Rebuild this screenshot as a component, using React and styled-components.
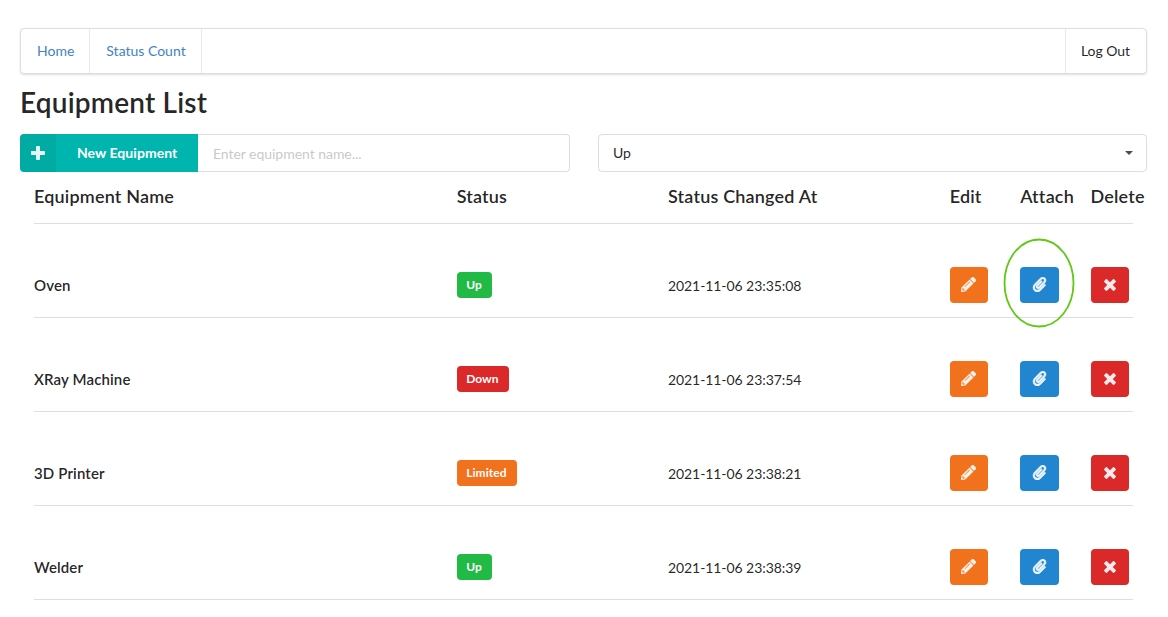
import React from "react";
import styled, { createGlobalStyle } from "styled-components";
import { FaPaperclip, FaPencilAlt } from "react-icons/fa";

const GlobalStyle = createGlobalStyle`
  *, *::before, *::after { box-sizing: border-box; }
  body {
    margin: 0;
    background: #fff;
    color: rgba(0, 0, 0, 0.87);
    font-family: Lato, "Liberation Sans", sans-serif;
    font-size: 14px;
    line-height: 20px;
    overflow: hidden;
  }
`;

const Page = styled.main`
  width: 1127px;
  margin-left: 20px;
  padding-top: 28px;
`;

const Menu = styled.nav`
  display: flex;
  height: 46px;
  border: 1px solid rgba(34, 36, 38, 0.15);
  border-radius: 4px;
  box-shadow: 0 1px 2px 0 rgba(34, 36, 38, 0.15);
`;

const MenuItem = styled.a`
  display: flex;
  align-items: center;
  padding: 0 15px 0 16px;
  color: ${(p) => (p.$plain ? "rgba(0, 0, 0, 0.87)" : "#4183c4")};
  border-right: ${(p) => (p.$plain ? "0" : "1px solid rgba(34, 36, 38, 0.1)")};
  border-left: ${(p) => (p.$plain ? "1px solid rgba(34, 36, 38, 0.1)" : "0")};
  margin-left: ${(p) => (p.$plain ? "auto" : "0")};
  ${(p) => p.$plain && "padding: 0 16px 0 15px; letter-spacing: -0.05px;"}
`;

const Title = styled.h1`
  margin: 10px 0 14px;
  font-size: 28px;
  line-height: 36px;
  font-weight: 600;
  letter-spacing: 0.19px;
`;

const Controls = styled.div`
  display: grid;
  grid-template-columns: 550px 549px;
  column-gap: 28px;
  height: 38px;
`;

const SearchGroup = styled.div`
  display: flex;
`;

const NewButton = styled.button`
  display: flex;
  align-items: center;
  width: 178px;
  padding: 0;
  border: 0;
  border-radius: 4px 0 0 4px;
  overflow: hidden;
  background: #00b5ad;
  color: #fff;
  font: 700 14px/14px Lato, sans-serif;
  letter-spacing: 0.05px;
`;

const ButtonIcon = styled.span`
  display: flex;
  align-items: center;
  justify-content: center;
  width: 36px;
  height: 100%;
  margin-right: 21px;
  background: rgba(0, 0, 0, 0.05);
`;

const NameInput = styled.input`
  flex: 1;
  min-width: 0;
  padding: 1px 14px 0 15px;
  border: 1px solid rgba(34, 36, 38, 0.15);
  border-left: 0;
  border-radius: 0 4px 4px 0;
  font: 400 14px/17px Lato, sans-serif;
  letter-spacing: -0.04px;
  &::placeholder { color: rgba(191, 191, 191, 0.87); }
`;

const Select = styled.div`
  display: flex;
  align-items: center;
  justify-content: space-between;
  padding: 0 13px 0 14px;
  border: 1px solid rgba(34, 36, 38, 0.15);
  border-radius: 4px;
`;

const Caret = styled.span`
  width: 0;
  height: 0;
  border: 4px solid transparent;
  border-top-color: rgba(0, 0, 0, 0.7);
  border-bottom: 0;
`;

const Row = styled.div`
  display: grid;
  grid-template-columns: 6fr 3fr 4fr 1fr 1fr 1fr;
  align-items: center;
  height: ${(p) => (p.$head ? "51px" : "93px")};
  padding: ${(p) => (p.$head ? "0 0 3px" : "28px 0 0")};
  font-size: ${(p) => (p.$head ? "18px" : "14px")};
  font-weight: ${(p) => (p.$head ? 600 : 400)};
  letter-spacing: ${(p) => (p.$head ? "0.18px" : "0")};
`;

const Cell = styled.div`
  padding-left: 14px;
  min-width: 0;
  white-space: nowrap;
`;

const DateText = styled.div`
  padding-top: 2px;
  letter-spacing: -0.07px;
`;

const Divider = styled.hr`
  height: 1px;
  margin: 0 14px;
  border: 0;
  background: #dededf;
`;

const Name = styled.div`
  font-size: 15px;
  font-weight: 600;
  letter-spacing: 0.13px;
`;

const STATUS_COLORS = { Up: "#21ba45", Down: "#db2828", Limited: "#f2711c" };

const StatusLabel = styled.span`
  display: block;
  width: fit-content;
  height: 26px;
  padding: 7px 10px 7px 9.5px;
  border-radius: 4px;
  background: ${(p) => STATUS_COLORS[p.$status]};
  color: #fff;
  font-size: 12px;
  line-height: 12px;
  font-weight: 700;
  letter-spacing: 0.06px;
`;

const IconButton = styled.button`
  position: relative;
  display: flex;
  align-items: center;
  justify-content: center;
  width: ${(p) => p.$width || 38}px;
  height: 36px;
  padding: 0;
  border: 0;
  border-radius: 4px;
  background: ${(p) => p.$color};
  color: rgba(255, 255, 255, 0.9);
`;

const Highlight = styled.svg`
  position: absolute;
  left: -17px;
  top: -29px;
  width: 72px;
  height: 90px;
  pointer-events: none;
`;

const PlusIcon = () => (
  <svg width="14" height="16" viewBox="0 0 448 512" fill="currentColor" opacity="0.9">
    <path d="M448 294.2v-76.4c0-13.3-10.7-24-24-24H286.2V56c0-13.3-10.7-24-24-24h-76.4c-13.3 0-24 10.7-24 24v137.8H24c-13.3 0-24 10.7-24 24v76.4c0 13.3 10.7 24 24 24h137.8V456c0 13.3 10.7 24 24 24h76.4c13.3 0 24-10.7 24-24V318.2H424c13.3 0 24-10.7 24-24z" />
  </svg>
);

const CrossIcon = () => (
  <svg width="12" height="16" viewBox="0 0 384 512" fill="currentColor">
    <path d="M323.1 441l53.9-53.9c9.4-9.4 9.4-24.5 0-33.9L279.8 256l97.2-97.2c9.4-9.4 9.4-24.5 0-33.9L323.1 71c-9.4-9.4-24.5-9.4-33.9 0L192 168.2 94.8 71c-9.4-9.4-24.5-9.4-33.9 0L7 124.9c-9.4 9.4-9.4 24.5 0 33.9l97.2 97.2L7 353.2c-9.4 9.4-9.4 24.5 0 33.9L60.9 441c9.4 9.4 24.5 9.4 33.9 0l97.2-97.2 97.2 97.2c9.3 9.3 24.5 9.3 33.9 0z" />
  </svg>
);

const HEADINGS = ["Equipment Name", "Status", "Status Changed At", "Edit", "Attach", "Delete"];

const EQUIPMENT = [
  { name: "Oven", status: "Up", changed: "2021-11-06 23:35:08", highlighted: true },
  { name: "XRay Machine", status: "Down", changed: "2021-11-06 23:37:54" },
  { name: "3D Printer", status: "Limited", changed: "2021-11-06 23:38:21" },
  { name: "Welder", status: "Up", changed: "2021-11-06 23:38:39" },
];

export default function App() {
  return (
    <>
      <GlobalStyle />
      <Page>
        <Menu>
          <MenuItem>Home</MenuItem>
          <MenuItem>Status Count</MenuItem>
          <MenuItem $plain>Log Out</MenuItem>
        </Menu>
        <Title>Equipment List</Title>
        <Controls>
          <SearchGroup>
            <NewButton>
              <ButtonIcon><PlusIcon /></ButtonIcon>
              New Equipment
            </NewButton>
            <NameInput placeholder="Enter equipment name..." />
          </SearchGroup>
          <Select>
            Up
            <Caret />
          </Select>
        </Controls>
        <Row $head>
          {HEADINGS.map((h) => <Cell key={h}>{h}</Cell>)}
        </Row>
        <Divider />
        {EQUIPMENT.map((item) => (
          <React.Fragment key={item.name}>
            <Row>
              <Cell><Name>{item.name}</Name></Cell>
              <Cell><StatusLabel $status={item.status}>{item.status}</StatusLabel></Cell>
              <Cell><DateText>{item.changed}</DateText></Cell>
              <Cell>
                <IconButton $color="#f2711c" aria-label="Edit">
                  <FaPencilAlt size={15} stroke="currentColor" strokeWidth={8} />
                </IconButton>
              </Cell>
              <Cell>
                <IconButton $color="#2185d0" $width={39} aria-label="Attach">
                  <FaPaperclip size={15} stroke="currentColor" strokeWidth={14} />
                  {item.highlighted && (
                    <Highlight viewBox="0 0 72 90">
                      <ellipse cx="36" cy="45" rx="34.5" ry="43.5" fill="none" stroke="#5fc814" strokeWidth="1.8" />
                    </Highlight>
                  )}
                </IconButton>
              </Cell>
              <Cell>
                <IconButton $color="#db2828" aria-label="Delete"><CrossIcon /></IconButton>
              </Cell>
            </Row>
            <Divider />
          </React.Fragment>
        ))}
      </Page>
    </>
  );
}
